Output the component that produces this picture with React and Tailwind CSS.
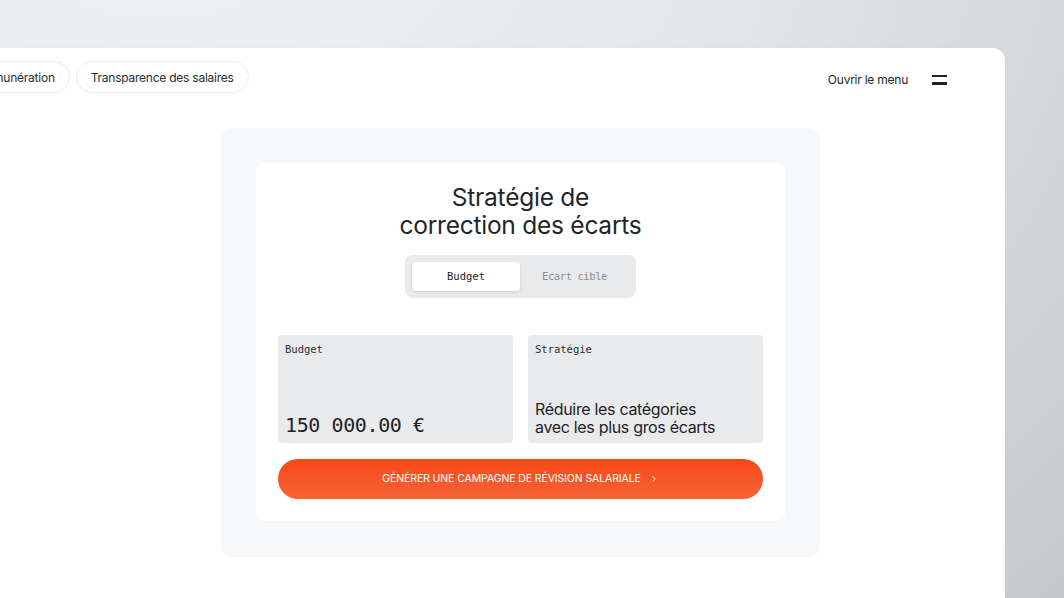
import { ChevronRight } from "lucide-react";

const PILLS = ["Rémunération", "Transparence des salaires"];
const MONO = { fontFamily: "'DejaVu Sans Mono', monospace" };

export default function App() {
  return (
    <div
      className="w-[1064px] h-[598px] overflow-hidden bg-[radial-gradient(ellipse_at_15%_-20%,#f1f2f3_0%,#e4e6e7_45%,#c4c9cc_100%)] pt-[48px] pr-[59px]"
      style={{ fontFamily: "Inter, 'Noto Sans', sans-serif" }}
    >
      {/* ── Window ── */}
      <div className="ml-[-60px] h-[600px] bg-white rounded-tr-[12px] rounded-tl-[12px] shadow-[0_0_2px_rgba(0,0,0,0.06)]">
        {/* Header */}
        <header className="flex items-center justify-between pt-[13px] pl-[24px] pr-[58px]">
          <nav className="flex items-center gap-[6px]">
            {PILLS.map((p) => (
              <span
                key={p}
                className="h-[32px] px-[14px] pt-[1px] flex items-center rounded-full border border-[#ebecee] text-[12px] tracking-[-0.02em] text-[#2a2f33]"
              >
                {p}
              </span>
            ))}
          </nav>
          <div className="flex items-center gap-[24px] pt-[5px]">
            <span className="text-[12px] tracking-[-0.02em] text-[#22272b]">Ouvrir le menu</span>
            <span className="flex flex-col gap-[5px]">
              <span className="block w-[15px] h-[2.5px] bg-[#1f2326]" />
              <span className="block w-[15px] h-[2.5px] bg-[#1f2326]" />
            </span>
          </div>
        </header>

        {/* Content */}
        <main className="pl-[281px] pt-[35px]">
          <div className="w-[599px] p-[35px] pb-[36px] bg-[#f7f8f9] rounded-[12px]">
            <div className="bg-white rounded-[8px] p-[22px] pb-[22px] flex flex-col items-center">
              <h1 className="text-[24.5px] leading-[28px] text-[#1e2629] text-center mt-[-2px] tracking-[-0.01em]">
                Stratégie de
                <br />
                correction des écarts
              </h1>

              <div
                className="mt-[16px] w-[231px] h-[43px] p-[7px] flex bg-[#e9eaec] rounded-[8px] text-[10.5px]"
                style={MONO}
              >
                <span className="w-[108px] flex items-center justify-center bg-white rounded-[4px] shadow-[0_1px_3px_rgba(0,0,0,0.12)] text-[#1e2326]">
                  Budget
                </span>
                <span className="flex-1 flex items-center justify-center text-[#8a8e92] tracking-[-0.04em]">
                  Ecart cible
                </span>
              </div>

              <div className="mt-[37px] w-full grid grid-cols-2 gap-[15px]">
                <div className="h-[108px] bg-[#e9eaec] rounded-[4px] px-[7px] pt-[7px] pb-[6px] flex flex-col justify-between">
                  <span className="text-[10.5px] text-[#2a2f33]" style={MONO}>
                    Budget
                  </span>
                  <span
                    className="text-[20px] leading-[24px] text-[#1e2326] tracking-[-0.02em]"
                    style={MONO}
                  >
                    150 000.00 €
                  </span>
                </div>
                <div className="h-[108px] bg-[#e9eaec] rounded-[4px] px-[7px] pt-[7px] pb-[7px] flex flex-col justify-between">
                  <span className="text-[10.5px] text-[#2a2f33]" style={MONO}>
                    Stratégie
                  </span>
                  <span className="text-[16px] leading-[18px] tracking-[-0.02em] text-[#1e2326]">
                    Réduire les catégories
                    <br />
                    avec les plus gros écarts
                  </span>
                </div>
              </div>

              <button className="mt-[16px] w-full h-[40px] shrink-0 rounded-full bg-gradient-to-b from-[#f54815] to-[#f76437] text-white text-[10.5px] tracking-[-0.01em] flex items-center justify-center gap-[8px]">
                GÉNÉRER UNE CAMPAGNE DE RÉVISION SALARIALE
                <ChevronRight size={10} strokeWidth={2} />
              </button>
            </div>
          </div>
        </main>
      </div>
    </div>
  );
}
